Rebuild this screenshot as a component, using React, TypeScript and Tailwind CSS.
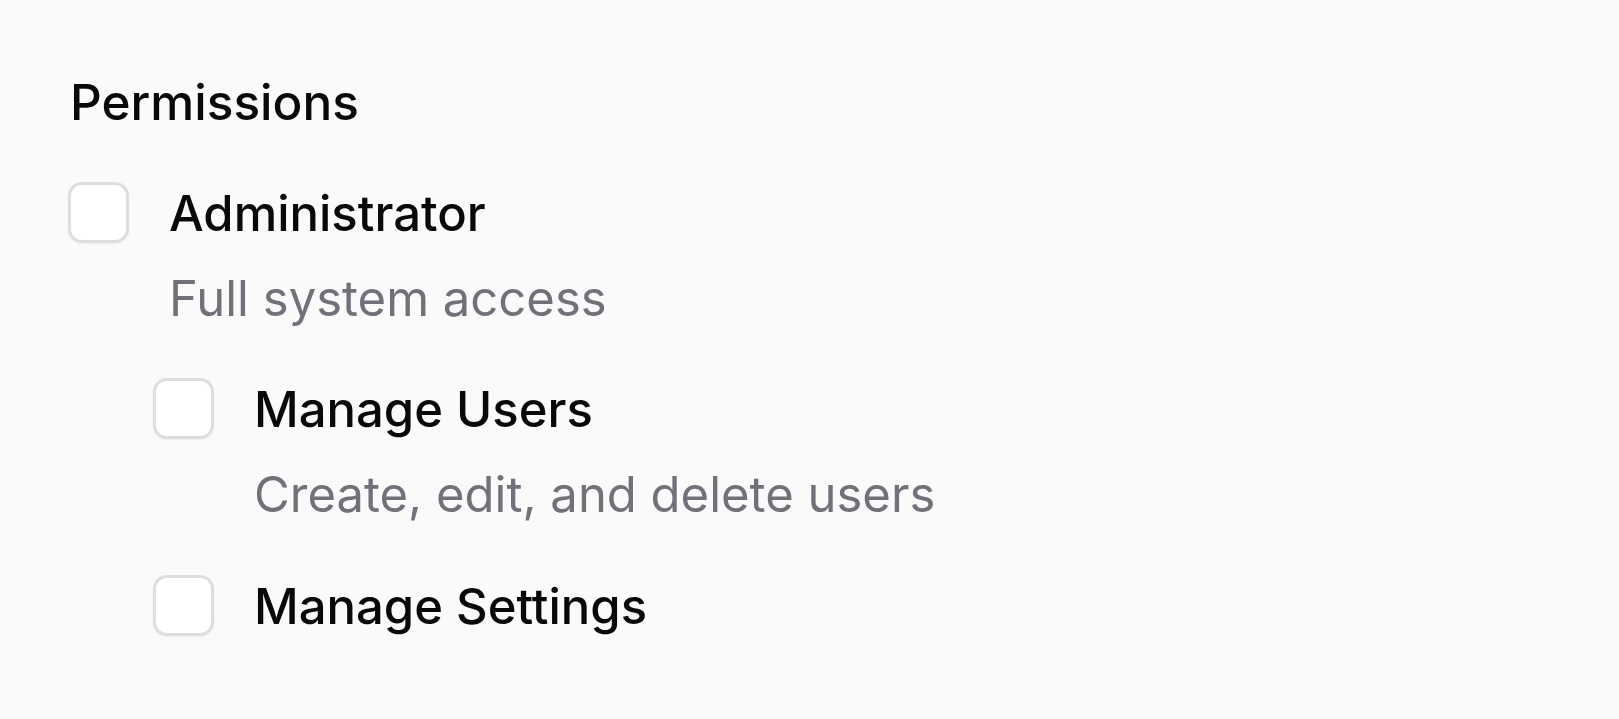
import React from "react";

function Box() {
  return (
    <div className="h-[61px] w-[61px] shrink-0 rounded-[14px] border-[3px] border-[#dedee0] bg-white shadow-[0_1px_2px_rgba(0,0,0,0.05)]" />
  );
}

function Item({ label, desc }: { label: string; desc?: string }) {
  return (
    <div className="flex items-start">
      <Box />
      <div className="ml-[40px] mt-[2px] flex flex-col">
        <span className="text-[49px] leading-[60px] font-medium text-[#09090b]">{label}</span>
        {desc && (
          <span className="mt-[25px] text-[49px] leading-[60px] text-[#71717a]">{desc}</span>
        )}
      </div>
    </div>
  );
}

export default function App() {
  return (
    <div
      className="min-h-screen bg-[#fafafa] pl-[68px] pt-[72px]"
      style={{ fontFamily: "Inter, 'Noto Sans', sans-serif" }}
    >
      <h3 className="ml-[2px] text-[49.5px] leading-[60px] font-medium text-[#09090b]">Permissions</h3>
      <div className="mt-[50px] flex flex-col">
        <Item label="Administrator" desc="Full system access" />
        <div className="ml-[85px] mt-[49px] flex flex-col gap-[50px]">
          <Item label="Manage Users" desc="Create, edit, and delete users" />
          <Item label="Manage Settings" />
        </div>
      </div>
    </div>
  );
}
